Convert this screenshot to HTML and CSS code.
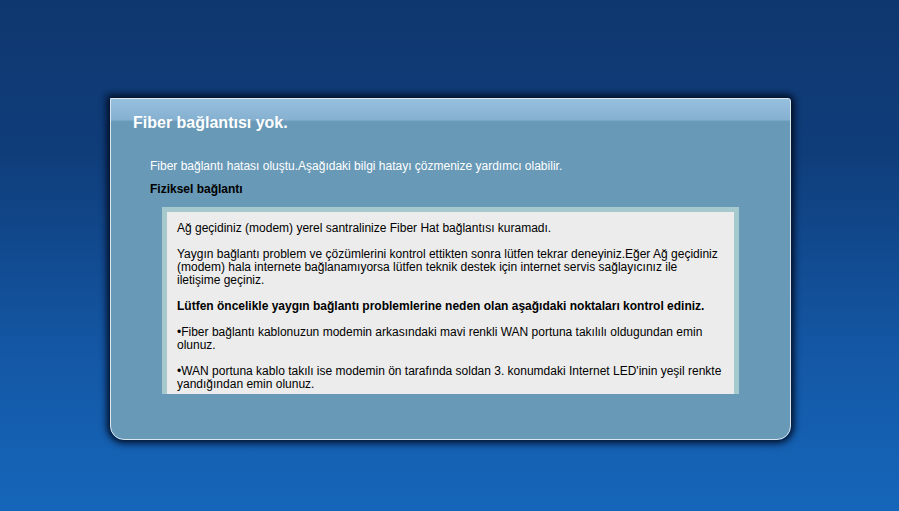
FILE: index.html
```html
<!DOCTYPE html>
<html>
<head>
    <meta charset="utf-8">
    <link rel="stylesheet" href="styles.css">
</head>
<body>

<div class="panel">
    <h1 class="title">Fiber bağlantısı yok.</h1>
    <div class="content">
        <p class="intro">Fiber bağlantı hatası oluştu.Aşağıdaki bilgi hatayı çözmenize yardımcı olabilir.</p>
        <p class="section">Fiziksel bağlantı</p>

        <!-- scrolling help text -->
        <div class="help-box">
            <div class="help-text">
                <p>Ağ geçidiniz (modem) yerel santralinize Fiber Hat bağlantısı kuramadı.</p>
                <p>Yaygın bağlantı problem ve çözümlerini kontrol ettikten sonra lütfen tekrar deneyiniz.Eğer Ağ geçidiniz<br>(modem) hala internete bağlanamıyorsa lütfen teknik destek için internet servis sağlayıcınız ile<br>iletişime geçiniz.</p>
                <p><strong>Lütfen öncelikle yaygın bağlantı problemlerine neden olan aşağıdaki noktaları kontrol ediniz.</strong></p>
                <p>&bull;Fiber bağlantı kablonuzun modemin arkasındaki mavi renkli WAN portuna takılılı oldugundan emin<br>olunuz.</p>
                <p>&bull;WAN portuna kablo takılı ise modemin ön tarafında soldan 3. konumdaki Internet LED'inin yeşil renkte<br>yandığından emin olunuz.</p>
            </div>
        </div>
    </div>
</div>

</body>
</html>
```

FILE: styles.css
```css
/* General Styling */
html, body {
    height: 100%;
}

body {
    margin: 0;
    padding: 0;
    font-family: "Liberation Sans", Arial, sans-serif;
    background: linear-gradient(to bottom, #0f376f 0%, #0f3d7a 30%, #1458a6 70%, #1566ba 100%);
    overflow: hidden;
}

/* Main panel */
.panel {
    width: 679px;
    height: 340px;
    margin: 98px 0 0 110px;
    border: 1px solid #dbe6ee;
    border-radius: 0 3px 14px 14px;
    background: linear-gradient(to bottom, #97c0df 0, #86b0d0 21px, #6e9dbd 22px, #6899b7 23px, #6899b6 100%);
    box-shadow: 0 0 7px 3px rgba(1, 8, 28, 0.95);
}

.title {
    margin: 15px 0 0 22px;
    font-size: 16px;
    line-height: 18px;
    font-weight: bold;
    color: #fff;
}

.content {
    padding: 27px 0 0 39px;
}

.intro {
    margin: 0;
    font-size: 12px;
    line-height: 14px;
    color: #fff;
}

.section {
    margin: 9px 0 0;
    font-size: 12px;
    line-height: 14px;
    font-weight: bold;
    color: #000;
}

/* Help box */
.help-box {
    width: 567px;
    height: 182px;
    margin: 11px 0 0 12px;
    border: 5px solid #a5c9cd;
    border-bottom: none;
    background-color: #ececec;
    overflow: hidden;
}

.help-text {
    padding: 10px 4px 0 10px;
    font-size: 12px;
    line-height: 13px;
    color: #000;
    white-space: nowrap;
}

.help-text p {
    margin: 0 0 13px;
}
```
